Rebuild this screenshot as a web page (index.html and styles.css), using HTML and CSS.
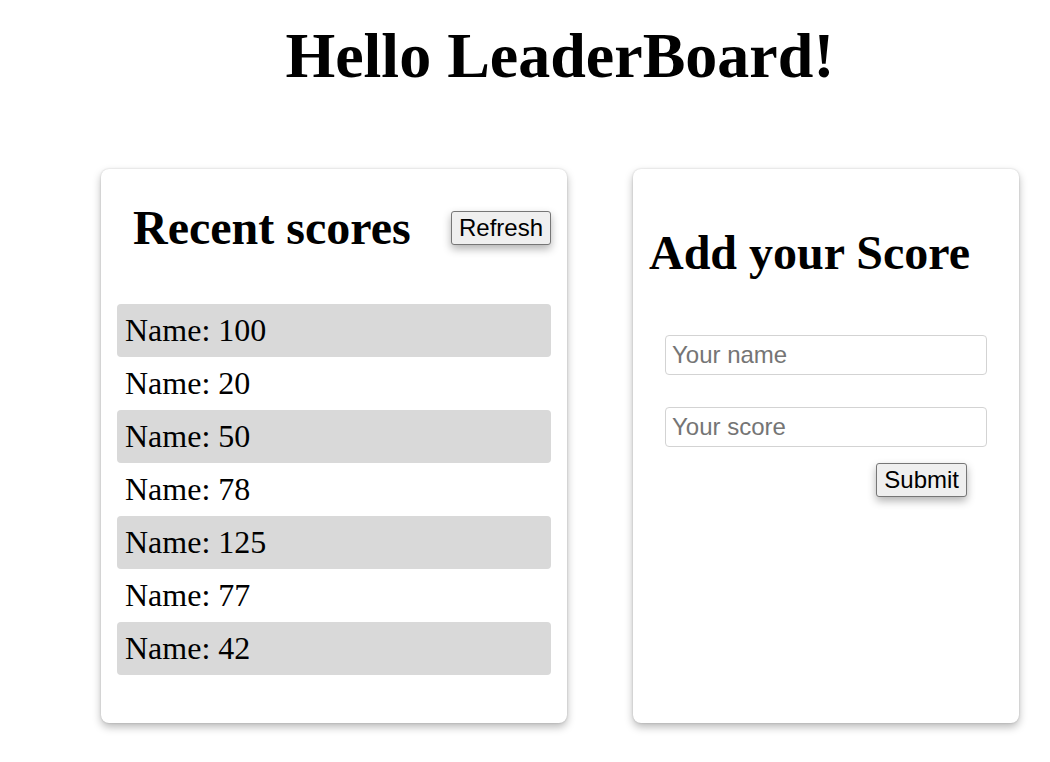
FILE: index.html
```html
<!DOCTYPE html>
<html>
<head>
<meta charset="utf-8">
<link rel="stylesheet" href="styles.css">
</head>
<body>
<div class="page">
  <h1 class="title">Hello LeaderBoard!</h1>
  <div class="cards">
    <section class="card card-scores">
      <div class="card-header">
        <h2 class="card-title card-title-indent">Recent scores</h2>
        <button class="btn" type="button">Refresh</button>
      </div>
      <ul class="score-list">
        <li class="score-row">Name: 100</li>
        <li class="score-row">Name: 20</li>
        <li class="score-row">Name: 50</li>
        <li class="score-row">Name: 78</li>
        <li class="score-row">Name: 125</li>
        <li class="score-row">Name: 77</li>
        <li class="score-row">Name: 42</li>
      </ul>
    </section>
    <section class="card card-add">
      <h2 class="card-title card-title-add">Add your Score</h2>
      <form class="score-form">
        <input class="field" type="text" placeholder="Your name">
        <input class="field" type="text" placeholder="Your score">
        <button class="btn btn-submit" type="button">Submit</button>
      </form>
    </section>
  </div>
</div>
</body>
</html>
```

FILE: styles.css
```css
html, body {
  margin: 0;
  padding: 0;
  background: #ffffff;
}

body {
  font-family: "Liberation Serif", "Times New Roman", serif;
  color: #000;
}

.page {
  padding: 0 31px 30px 101px;
}

.title {
  margin: 19px 0 76px 0;
  font-size: 64px;
  font-weight: bold;
  text-align: center;
  line-height: normal;
}

.cards {
  display: flex;
  align-items: stretch;
  gap: 66px;
}

.card {
  box-sizing: border-box;
  background: #fff;
  border-radius: 8px;
  box-shadow: 0 4px 8px 0 rgba(0, 0, 0, 0.28), 0 0 2px rgba(0, 0, 0, 0.18);
  padding: 16px;
}

.card-scores {
  width: 466px;
}

.card-add {
  width: 386px;
}

.card-header {
  display: flex;
  align-items: center;
  justify-content: space-between;
  margin-top: 15px;
}

.card-title {
  margin: 0;
  font-size: 48px;
  font-weight: bold;
  line-height: normal;
}

.card-title-indent {
  padding-left: 16px;
}

.card-title-add {
  margin-top: 40px;
}

.btn {
  font-family: "Liberation Sans", Arial, sans-serif;
  font-size: 24px;
  line-height: normal;
  color: #000;
  background: #efefef;
  border: 1px solid #767676;
  border-radius: 3px;
  padding: 2px 7px;
  box-shadow: 0 4px 8px 0 rgba(0, 0, 0, 0.3);
}

.score-list {
  list-style: none;
  margin: 49px 0 32px 0;
  padding: 0;
}

.score-row {
  font-size: 32px;
  line-height: 37px;
  padding: 8px;
  border-radius: 4px;
}

.score-row:nth-child(odd) {
  background: #d9d9d9;
}

.score-form {
  display: flex;
  flex-direction: column;
  padding: 0 16px;
  margin-top: 55px;
}

.field {
  box-sizing: border-box;
  width: 100%;
  height: 40px;
  font-family: "Liberation Sans", Arial, sans-serif;
  font-size: 24px;
  padding: 5px 6px;
  border: 1px solid #d3d3d3;
  border-radius: 4px;
  margin: 0 0 32px 0;
  color: #000;
}

.field:nth-of-type(2) {
  margin-bottom: 16px;
}

.field::placeholder {
  color: #757575;
}

.btn-submit {
  align-self: flex-end;
  margin-right: 20px;
}
```
